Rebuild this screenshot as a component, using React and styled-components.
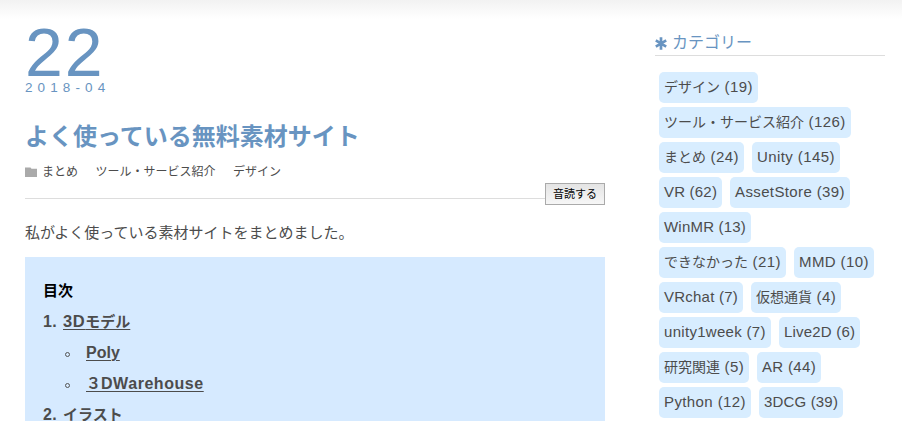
import styled, { createGlobalStyle } from "styled-components";

const GlobalStyle = createGlobalStyle`
  * {
    box-sizing: border-box;
  }

  body {
    margin: 0;
    overflow: hidden;
    background: #fff;
    color: #4c4c4c;
    font-family: "Liberation Sans", "Noto Sans CJK JP", sans-serif;
    font-size: 15px;
  }
`;

const Page = styled.div`
  display: flex;
  align-items: flex-start;
  gap: 50px;
  width: 902px;
  height: 421px;
  padding: 24px 17px 0 25px;
  overflow: hidden;
  background: linear-gradient(#f2f2f2, #fff 19px);
`;

const Article = styled.article`
  width: 580px;
`;

const Day = styled.div`
  height: 56px;
  color: #6894c1;
  font-size: 68px;
  line-height: 57px;
  letter-spacing: 2px;
`;

const Month = styled.div`
  color: #6894c1;
  font-size: 13.5px;
  line-height: 15px;
  letter-spacing: 5.1px;
`;

const Title = styled.h1`
  margin: 24px 0 0;
  color: #6894c1;
  font-size: 24px;
  font-weight: 700;
  line-height: 36px;
`;

const Meta = styled.div`
  display: flex;
  align-items: center;
  height: 20px;
  margin-top: 7px;
  font-size: 12px;
  line-height: 20px;

  svg {
    margin: -1px 5px 0 0;
  }

  span + span {
    margin-left: 17.5px;
  }
`;

const Toolbar = styled.div`
  display: flex;
  align-items: center;
  height: 22px;
  margin-top: 1px;

  &::before {
    content: "";
    flex: 1;
    height: 1px;
    margin-top: 9px;
    background: #ddd;
  }
`;

const ReadButton = styled.button`
  width: 60px;
  height: 22px;
  padding: 0;
  border: 1px solid #aaa;
  background: linear-gradient(#e4e4e4, #f6f6f6);
  color: #000;
  font-family: inherit;
  font-size: 11px;
  line-height: 20px;
`;

const Lead = styled.p`
  height: 30px;
  margin: 13px 0 9px;
  line-height: 30px;
`;

const Toc = styled.nav`
  height: 200px;
  padding: 18px;
  background: #d6eaff;
  font-weight: 700;
  line-height: 31px;
`;

const TocTitle = styled.div`
  color: #000;
`;

const TocRow = styled.div`
  display: grid;
  grid-template-columns: ${(p) => (p.$nested ? "23px" : "20px")} 1fr;
  height: 31px;
  padding-left: ${(p) => (p.$nested ? "20px" : "0")};
`;

const TocLink = styled.span`
  justify-self: start;
  text-decoration: underline;
  text-decoration-thickness: 1px;
  text-underline-offset: 2px;
`;

const Bullet = styled.i`
  align-self: center;
  width: 5px;
  height: 5px;
  margin: 3px 0 0 2px;
  border: 1px solid #555;
  border-radius: 50%;
`;

const Latin = styled.span`
  font-size: ${(p) => p.$size || 15}px;
  letter-spacing: ${(p) => p.$tracking ?? 0.4}px;
`;

const Sidebar = styled.aside`
  width: 230px;
`;

const SideTitle = styled.h2`
  display: flex;
  align-items: center;
  gap: 5px;
  height: 32px;
  margin: 0 0 16px;
  padding-top: 6px;
  border-bottom: 1px solid #ddd;
  color: #6894c1;
  font-size: 16px;
  font-weight: 400;
  line-height: 24px;

  svg {
    margin-top: 2px;
  }
`;

const Tags = styled.div`
  display: flex;
  flex-wrap: wrap;
  gap: 4px 8px;
  padding-left: 4px;
`;

const Tag = styled.a`
  width: ${(p) => p.$width}px;
  height: 31px;
  padding-left: 5px;
  border-radius: 5px;
  background: #d8edff;
  font-size: 14px;
  line-height: 30px;
  white-space: nowrap;
`;

const categories = [
  { ja: "デザイン", rest: " (19)", width: 99, tracking: 0.4 },
  { ja: "ツール・サービス紹介", rest: " (126)", width: 192, tracking: 0.4 },
  { ja: "まとめ", rest: " (24)", width: 85, tracking: 0.4 },
  { rest: "Unity (145)", width: 88, tracking: 0.42 },
  { rest: "VR (62)", width: 63, tracking: 0.2 },
  { rest: "AssetStore (39)", width: 120, tracking: 0.38 },
  { rest: "WinMR (13)", width: 92, tracking: 0.2 },
  { ja: "できなかった", rest: " (21)", width: 127, tracking: 0.4 },
  { rest: "MMD (10)", width: 80, tracking: 0.4 },
  { rest: "VRchat (7)", width: 84, tracking: 0.23 },
  { ja: "仮想通貨", rest: " (4)", width: 90, tracking: 0.4 },
  { rest: "unity1week (7)", width: 112, tracking: 0.3 },
  { rest: "Live2D (6)", width: 81, tracking: 0.2 },
  { ja: "研究関連", rest: " (5)", width: 90, tracking: 0.4 },
  { rest: "AR (44)", width: 64, tracking: 0.33 },
  { rest: "Python (12)", width: 92, tracking: 0.4 },
  { rest: "3DCG (39)", width: 84, tracking: 0.17 },
];

function FolderIcon() {
  return (
    <svg width="12" height="10" viewBox="0 0 12 10" fill="#aaa">
      <path d="M0 0.5h5.5l1 1.2H12V10H0z" />
    </svg>
  );
}

function AsteriskIcon() {
  return (
    <svg
      width="12"
      height="13"
      viewBox="0 0 12 13"
      stroke="currentColor"
      strokeWidth="2.7"
    >
      <path d="M6 .3v12.4M.8 3.4l10.4 6.2M11.2 3.4L.8 9.6" />
    </svg>
  );
}

export default function App() {
  return (
    <>
      <GlobalStyle />
      <Page>
        <Article>
          <Day>22</Day>
          <Month>2018-04</Month>
          <Title>よく使っている無料素材サイト</Title>
          <Meta>
            <FolderIcon />
            <span>まとめ</span>
            <span>ツール・サービス紹介</span>
            <span>デザイン</span>
          </Meta>
          <Toolbar>
            <ReadButton>音読する</ReadButton>
          </Toolbar>
          <Lead>私がよく使っている素材サイトをまとめました。</Lead>
          <Toc>
            <TocTitle>目次</TocTitle>
            <TocRow>
              <Latin $size={16}>1.</Latin>
              <TocLink>
                <Latin $size={16.5} $tracking={0.6}>3D</Latin>モデル
              </TocLink>
            </TocRow>
            <TocRow $nested>
              <Bullet />
              <TocLink>
                <Latin $size={16} $tracking={0}>Poly</Latin>
              </TocLink>
            </TocRow>
            <TocRow $nested>
              <Bullet />
              <TocLink>
                ３<Latin $size={16} $tracking={0.55}>DWarehouse</Latin>
              </TocLink>
            </TocRow>
            <TocRow>
              <Latin $size={16}>2.</Latin>
              <span>イラスト</span>
            </TocRow>
          </Toc>
        </Article>
        <Sidebar>
          <SideTitle>
            <AsteriskIcon />
            カテゴリー
          </SideTitle>
          <Tags>
            {categories.map((c) => (
              <Tag key={c.rest + c.width} $width={c.width}>
                {c.ja}
                <Latin $tracking={c.tracking}>{c.rest}</Latin>
              </Tag>
            ))}
          </Tags>
        </Sidebar>
      </Page>
    </>
  );
}
